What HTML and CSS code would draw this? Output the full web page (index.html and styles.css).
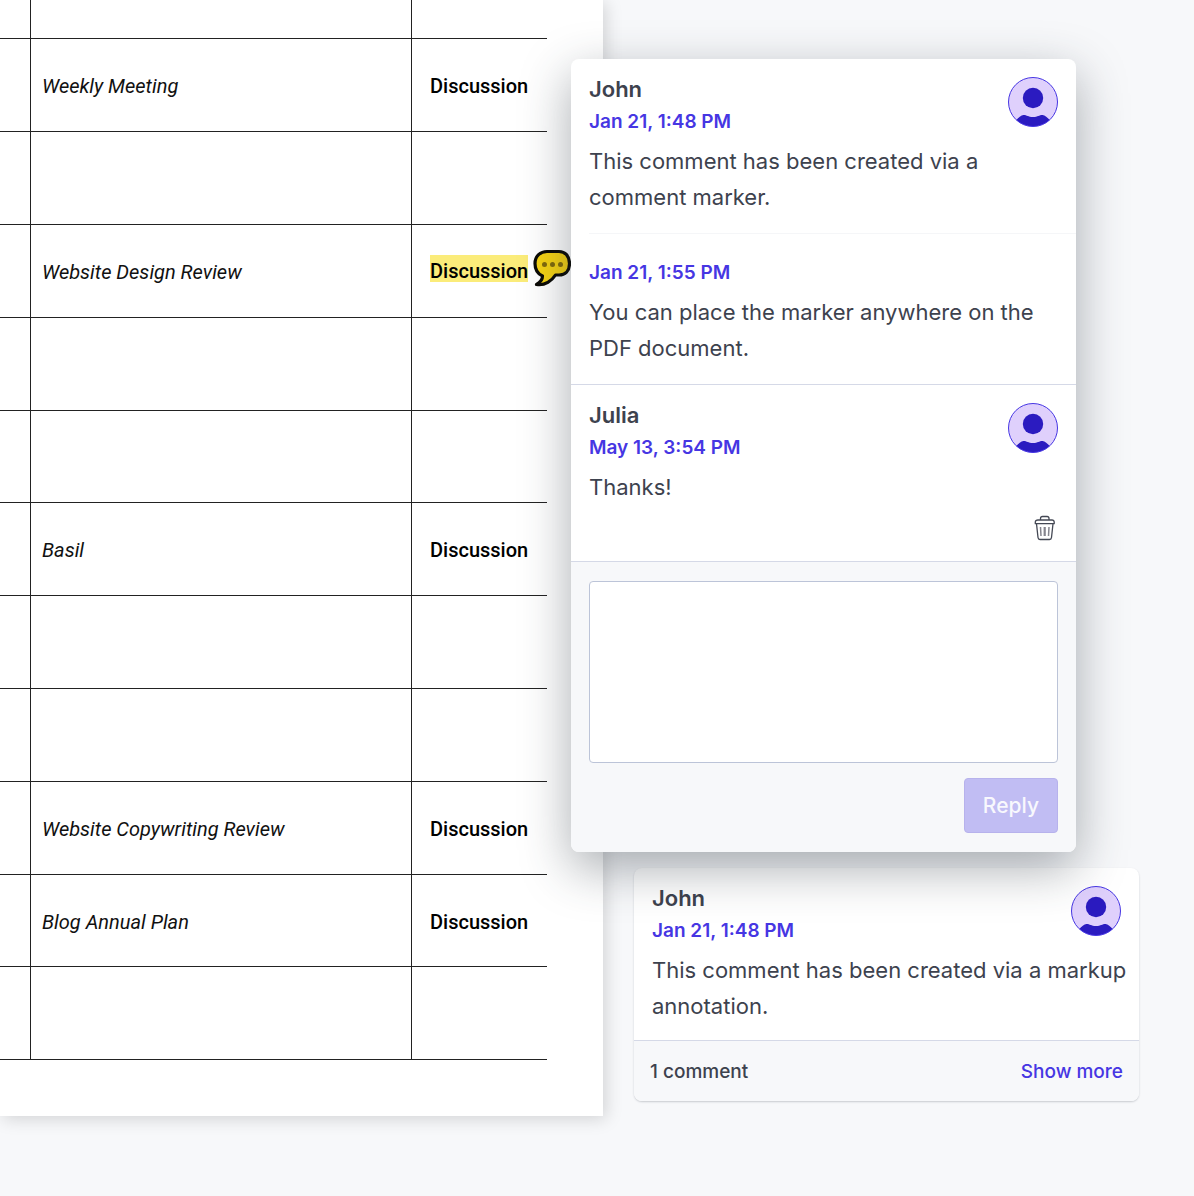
FILE: index.html
```html
<!DOCTYPE html>
<html lang="en">
<head>
<meta charset="utf-8">
<meta name="viewport" content="width=device-width, initial-scale=1">
<title>Document comments</title>
<link rel="stylesheet" href="styles.css">
</head>
<body>
<svg class="sprite" aria-hidden="true">
  <symbol id="avatar" viewBox="0 0 50 50">
    <circle cx="25" cy="25" r="24.5" fill="#dfd0fc"/>
    <g fill="#2b1bc0">
      <circle cx="25" cy="21" r="10.2"/>
      <path d="M8.300 43C10.500 40.500 13 38.300 15.500 38C19 38 20 40 25 40S31 38 34.500 38C37 38.300 39.500 40.500 41.700 43A24.500 24.500 0 0 1 8.300 43Z"/>
    </g>
    <circle cx="25" cy="25" r="24.5" fill="none" stroke="#4636e3"/>
  </symbol>
</svg>
<main class="viewer">
  <section class="paper" aria-label="Document">
    <table class="agenda">
      <colgroup><col class="col-edge"><col class="col-topic"><col></colgroup>
      <tbody>
        <tr><td></td><td></td><td></td></tr>
        <tr><td></td><td class="topic">Weekly Meeting</td><td class="kind">Discussion</td></tr>
        <tr><td></td><td></td><td></td></tr>
        <tr><td></td><td class="topic">Website Design Review</td><td class="kind"><div class="marked"><mark>Discussion</mark><button class="marker" type="button" aria-label="Open comment"><svg width="38" height="38" viewBox="0 0 38 38"><path d="M14 2.500H26C32 2.500 36.500 7 36.500 14.500S32 26 26 26H22.500C19 31.500 12 37 3.500 35.500C7 33.500 9.500 30.500 9.500 27C5 25 2 20.500 2 14.500C2 7 7.500 2.500 14 2.500Z" fill="#f5d313" stroke="#0a0a05" stroke-width="3.200" stroke-linejoin="round"/><g fill="#806b0b"><circle cx="11.500" cy="15.500" r="2.500"/><circle cx="19.500" cy="15.500" r="2.500"/><circle cx="27.500" cy="15.500" r="2.500"/></g></svg></button></div></td></tr>
        <tr><td></td><td></td><td></td></tr>
        <tr><td></td><td></td><td></td></tr>
        <tr><td></td><td class="topic">Basil</td><td class="kind">Discussion</td></tr>
        <tr><td></td><td></td><td></td></tr>
        <tr><td></td><td></td><td></td></tr>
        <tr><td></td><td class="topic">Website Copywriting Review</td><td class="kind">Discussion</td></tr>
        <tr><td></td><td class="topic">Blog Annual Plan</td><td class="kind">Discussion</td></tr>
        <tr><td></td><td></td><td></td></tr>
      </tbody>
    </table>
  </section>
  <aside class="threads" aria-label="Comments">
    <section class="thread thread-active">
      <article class="comment">
        <header class="comment-head">
          <div><h2 class="author">John</h2><time class="date">Jan 21, 1:48 PM</time></div>
          <svg class="avatar" aria-hidden="true"><use href="#avatar"/></svg>
        </header>
        <p class="text">This comment has been created via a comment marker.</p>
      </article>
      <article class="comment comment-follow">
        <time class="date">Jan 21, 1:55 PM</time>
        <p class="text">You can place the marker anywhere on the PDF document.</p>
      </article>
      <article class="comment comment-new">
        <header class="comment-head">
          <div><h2 class="author">Julia</h2><time class="date">May 13, 3:54 PM</time></div>
          <svg class="avatar" aria-hidden="true"><use href="#avatar"/></svg>
        </header>
        <p class="text">Thanks!</p>
        <div class="tools">
          <button class="delete" type="button" aria-label="Delete comment"><svg width="22" height="26" viewBox="0 0 22 26" fill="none" stroke="#444854" stroke-width="1.300" stroke-linejoin="round"><path d="M6.500 5V3.500Q6.500 1.500 8.500 1.500H13Q15 1.500 15 3.500V5"/><path d="M4 5H18Q20 5 20.200 7V8.700H1.300V7Q1.500 5 4 5Z"/><path d="M2.500 8.700L4 22.500Q4.200 24.500 6 24.500H15.500Q17.300 24.500 17.500 22.500L19 8.700"/><path d="M6.500 12L7 21M15 12L14.500 21" stroke="#85858e" stroke-width="1.500"/><path d="M10.700 12V21" stroke="#85858e" stroke-width="2.200"/></svg></button>
        </div>
      </article>
      <form class="reply">
        <textarea class="reply-input" aria-label="Your reply"></textarea>
        <button class="reply-button" type="button">Reply</button>
      </form>
    </section>
    <section class="thread">
      <article class="comment comment-preview">
        <header class="comment-head">
          <div><h2 class="author">John</h2><time class="date">Jan 21, 1:48 PM</time></div>
          <svg class="avatar" aria-hidden="true"><use href="#avatar"/></svg>
        </header>
        <p class="text">This comment has been created via a markup annotation.</p>
      </article>
      <footer class="summary"><span>1 comment</span><a href="#more">Show more</a></footer>
    </section>
  </aside>
</main>
</body>
</html>
```
FILE: styles.css
```css
* { box-sizing: border-box; }

body {
  min-height: 100vh;
  margin: 0;
  background: #f7f8fa;
  color: #3d424e;
  font-family: Inter, "Liberation Sans", sans-serif;
}

button { padding: 0; border: 0; background: none; font: inherit; cursor: pointer; }

.sprite { display: none; }

.viewer {
  display: grid;
  grid-template-columns: minmax(0, 1fr) 591px;
  align-items: start;
}

/* Document page */
.paper {
  padding: 0 56px 56px 0;
  background: #fff;
  box-shadow: 3px 3px 16px rgba(0, 0, 0, 0.15);
}

.agenda {
  width: 100%;
  border-collapse: separate;
  border-spacing: 0;
  table-layout: fixed;
  color: #111;
  font: 20px/28px Roboto, "Liberation Sans", sans-serif;
}

.col-edge { width: 31px; }
.col-topic { width: 381px; }

.agenda tr { height: 93px; }
.agenda tr:first-child { height: 39px; }
.agenda tr:nth-child(5n + 6) { height: 92px; }

.agenda td {
  padding: 2px 0 0;
  border-right: 1px solid #222;
  border-bottom: 1px solid #222;
  white-space: nowrap;
}

.agenda td:last-child { border-right: 0; }
.agenda .topic { padding-left: 11px; font-style: italic; }
.agenda .kind { padding-left: 18px; color: #000; font-weight: 500; }

.marked { display: flex; align-items: center; gap: 5px; height: 38px; }
.marked mark { height: 27px; margin-bottom: 7px; padding-top: 3px; background: #fbec7a; color: inherit; line-height: 27px; }
.marker { flex: none; height: 38px; margin-bottom: 9px; }
.marker svg { display: block; }

/* Comment threads */
.threads {
  display: flex;
  flex-direction: column;
  gap: 16px;
  padding: 59px 55px 24px 31px;
}

.thread {
  border-radius: 8px;
  background: #fff;
  box-shadow: 0 1px 2px rgba(30, 40, 60, 0.22);
}

.thread-active {
  z-index: 1;
  margin: 0 63px 0 -63px;
  box-shadow: 0 16px 50px rgba(40, 50, 60, 0.4);
}

.comment { padding: 14px 18px 18px; }
.comment-preview { padding-bottom: 16px; }

.comment-follow {
  margin-left: 18px;
  padding: 22px 18px 18px 0;
  border-top: 1px solid #f5f6f8;
}

.comment-new { padding-bottom: 19px; border-top: 1px solid #d5d9e7; }

.comment-head { display: flex; justify-content: space-between; align-items: flex-start; }
.author { margin: 0; font-size: 22px; font-weight: 600; line-height: 32px; }
.date { display: block; padding-top: 1px; color: #4636e3; font-size: 19px; font-weight: 600; line-height: 32px; }
.text { margin: 5px -10px 0 0; font-size: 22px; line-height: 36px; }
.avatar { flex: none; width: 50px; height: 50px; margin-top: 4px; }

.tools { display: flex; justify-content: flex-end; padding-top: 10px; }
.delete { height: 26px; margin: 0 2px 1px 0; }
.delete svg { display: block; }

.reply {
  display: flex;
  flex-direction: column;
  align-items: flex-end;
  gap: 15px;
  padding: 19px 18px;
  border-top: 1px solid #d5d9e7;
  border-radius: 0 0 8px 8px;
  background: #f7f8fa;
}

.reply-input {
  width: 100%;
  height: 182px;
  padding: 12px;
  border: 1px solid #bcc4d8;
  border-radius: 4px;
  background: #fff;
  color: inherit;
  font: inherit;
  font-size: 22px;
  resize: none;
}

.reply-button {
  height: 55px;
  padding: 0 18px;
  border: 1px solid #b7b2ec;
  border-radius: 4px;
  background: #c1bdf3;
  color: #f8f8fd;
  font-size: 21px;
  font-weight: 500;
}

.summary {
  display: flex;
  justify-content: space-between;
  align-items: center;
  height: 61px;
  padding: 0 16px;
  border-top: 1px solid #d5d9e7;
  border-radius: 0 0 8px 8px;
  background: #f7f8fa;
  font-size: 19px;
  font-weight: 500;
}

.summary a { color: #4636e3; text-decoration: none; }
```
